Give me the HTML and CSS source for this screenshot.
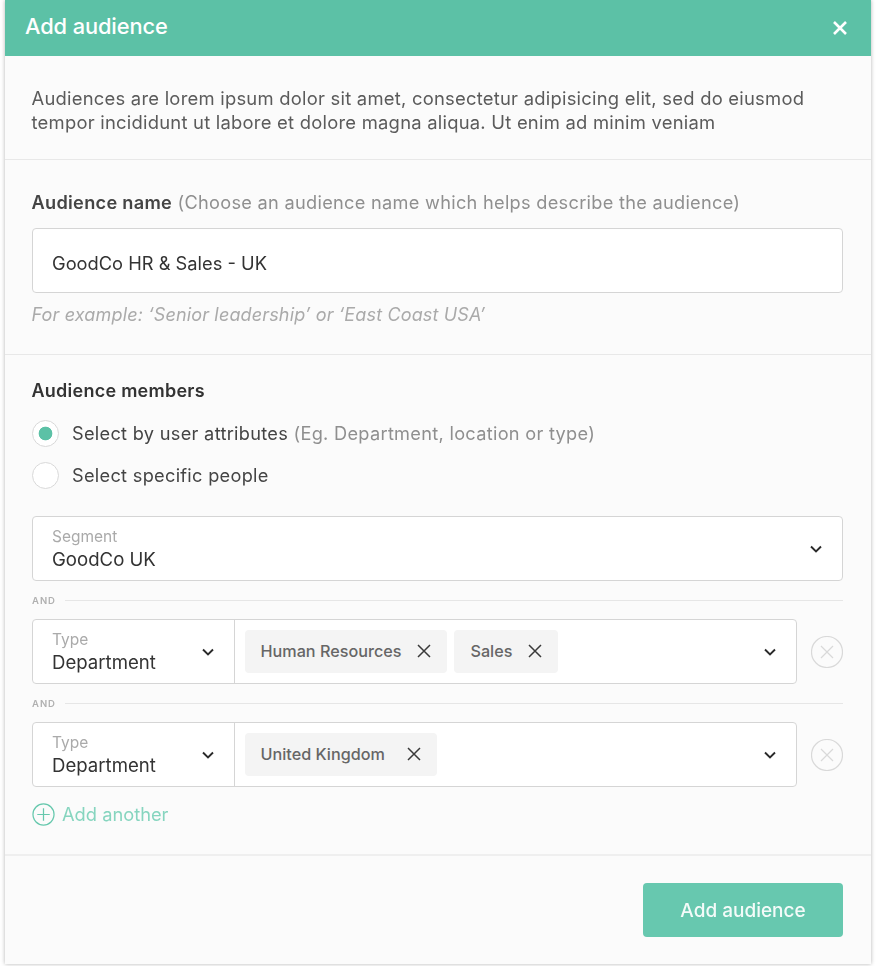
FILE: index.html
```html
<!DOCTYPE html>
<html lang="en">
<head>
<meta charset="utf-8">
<title>Add audience</title>
<link rel="stylesheet" href="styles.css">
</head>
<body>
<main class="modal">
  <header class="modal-head">
    <h1 class="modal-title">Add audience</h1>
    <svg class="close-icon" viewBox="0 0 16 16" width="16" height="16"><path d="M2 2l12 12M14 2L2 14"/></svg>
  </header>
  <section class="intro">
    <p>Audiences are lorem ipsum dolor sit amet, consectetur adipisicing elit, sed do eiusmod tempor incididunt ut labore et dolore magna aliqua. Ut enim ad minim veniam</p>
  </section>
  <section class="name-section">
    <div class="field-label"><strong>Audience name</strong> <span class="muted">(Choose an audience name which helps describe the audience)</span></div>
    <div class="box name-input">GoodCo HR &amp; Sales - UK</div>
    <div class="hint">For example: ‘Senior leadership’ or ‘East Coast USA’</div>
  </section>
  <section class="members">
    <h2 class="members-title">Audience members</h2>
    <div class="radio-row radio-row-1">
      <span class="radio radio-on"></span>
      <span class="radio-text">Select by user attributes <span class="muted">(Eg. Department, location or type)</span></span>
    </div>
    <div class="radio-row radio-row-2">
      <span class="radio"></span>
      <span class="radio-text">Select specific people</span>
    </div>
    <div class="box segment">
      <div class="stack">
        <span class="mini">Segment</span>
        <span class="value">GoodCo UK</span>
      </div>
      <svg class="chev" viewBox="0 0 12 8" width="12" height="8"><path d="M1 1.5l5 5 5-5"/></svg>
    </div>
    <div class="and"><span>AND</span><i></i></div>
    <div class="rule">
      <div class="box rule-box">
        <div class="type">
          <div class="stack">
            <span class="mini">Type</span>
            <span class="value">Department</span>
          </div>
          <svg class="chev" viewBox="0 0 12 8" width="12" height="8"><path d="M1 1.5l5 5 5-5"/></svg>
        </div>
        <div class="tags">
          <span class="tag tag-a">Human Resources<svg class="tag-x" viewBox="0 0 14 14" width="14" height="14"><path d="M1 1l12 12M13 1L1 13"/></svg></span>
          <span class="tag tag-b">Sales<svg class="tag-x" viewBox="0 0 14 14" width="14" height="14"><path d="M1 1l12 12M13 1L1 13"/></svg></span>
          <svg class="chev chev-end" viewBox="0 0 12 8" width="12" height="8"><path d="M1 1.5l5 5 5-5"/></svg>
        </div>
      </div>
      <svg class="remove" viewBox="0 0 32 32" width="32" height="32"><circle cx="16" cy="16" r="15.5"/><path d="M10 10l12 12M22 10L10 22"/></svg>
    </div>
    <div class="and"><span>AND</span><i></i></div>
    <div class="rule">
      <div class="box rule-box">
        <div class="type">
          <div class="stack">
            <span class="mini">Type</span>
            <span class="value">Department</span>
          </div>
          <svg class="chev" viewBox="0 0 12 8" width="12" height="8"><path d="M1 1.5l5 5 5-5"/></svg>
        </div>
        <div class="tags">
          <span class="tag tag-c">United Kingdom<svg class="tag-x" viewBox="0 0 14 14" width="14" height="14"><path d="M1 1l12 12M13 1L1 13"/></svg></span>
          <svg class="chev chev-end" viewBox="0 0 12 8" width="12" height="8"><path d="M1 1.5l5 5 5-5"/></svg>
        </div>
      </div>
      <svg class="remove" viewBox="0 0 32 32" width="32" height="32"><circle cx="16" cy="16" r="15.5"/><path d="M10 10l12 12M22 10L10 22"/></svg>
    </div>
    <div class="add-another">
      <svg class="plus" viewBox="0 0 24 24" width="23" height="23"><circle cx="12" cy="12" r="11"/><path d="M12 5.5v13M5.5 12h13"/></svg>
      <span>Add another</span>
    </div>
  </section>
  <footer class="modal-foot">
    <button class="primary" type="button">Add audience</button>
  </footer>
</main>
</body>
</html>
```

FILE: styles.css
```css
* { box-sizing: border-box; }
html, body { margin: 0; padding: 0; height: 100%; }
body {
  background: #fff;
  font-family: Inter, "Liberation Sans", sans-serif;
  color: #3a3a3a;
  padding: 0 0 2px 4.5px;
  overflow: hidden;
}
.modal {
  width: 866px;
  height: 964px;
  background: #fbfbfb;
  box-shadow: 0 0 4px rgba(0,0,0,.3);
  display: flex;
  flex-direction: column;
  filter: blur(.35px);
}
.modal-head {
  height: 56px;
  flex: none;
  background: #5cc1a6;
  display: flex;
  align-items: center;
  justify-content: space-between;
  padding: 0 22.5px 4px 20.5px;
  color: #fff;
}
.modal-title { margin: 0; font-size: 21.8px; font-weight: 500; letter-spacing: -.1px; }
.close-icon { fill: none; stroke: #fff; stroke-width: 2.6; margin-top: 3px; }
.intro {
  height: 104px;
  flex: none;
  padding: 29.5px 27px 0;
  border-bottom: 1px solid #e8e8e8;
  font-size: 18.4px;
  letter-spacing: .24px;
  line-height: 24px;
  color: #5b5b5b;
}
.intro p { margin: 0; width: 800px; }
.name-section {
  height: 195px;
  flex: none;
  padding: 30px 27.5px 0;
  border-bottom: 1px solid #e8e8e8;
}
.field-label { font-size: 18.2px; letter-spacing: .28px; line-height: 24px; margin: 0 0 0 -.5px; }
.field-label strong { font-weight: 600; color: #444; }
.muted { color: #8f8f8f; }
.box {
  background: #fff;
  border: 1px solid #d5d5d5;
  border-radius: 4px;
}
.name-input {
  margin-top: 14px;
  height: 65px;
  display: flex;
  align-items: center;
  padding: 5px 19px 0;
  font-size: 18.3px;
  color: #333;
}
.hint {
  margin: 10px 0 0 -.5px;
  font-size: 18px;
  letter-spacing: .15px;
  line-height: 24px;
  font-style: italic;
  color: #aaa;
}
.members {
  height: 501px;
  flex: none;
  padding: 24px 27.5px 0;
  border-bottom: 2px solid #efefef;
}
.members-title { margin: 0 0 0 -.5px; font-size: 18px; letter-spacing: .25px; line-height: 24px; font-weight: 600; color: #333; }
.radio-row {
  height: 27px;
  display: flex;
  align-items: center;
  gap: 13px;
  font-size: 18.2px;
  letter-spacing: .29px;
  color: #444;
}
.radio-text { margin-top: -2px; }
.radio-row-1 { margin-top: 17px; }
.radio-row-2 { margin-top: 15px; }
.radio {
  width: 27px;
  height: 27px;
  border-radius: 50%;
  border: 1px solid #d8d8d8;
  background: #fff;
  flex: none;
}
.radio-on {
  background: radial-gradient(circle, #5cc1a6 0 6.5px, #fff 7.2px);
}
.segment {
  margin-top: 27px;
  height: 65px;
  padding: 0 20px 0 19px;
  display: flex;
  align-items: center;
  justify-content: space-between;
}
.stack { display: flex; flex-direction: column; padding-top: 2px; }
.mini { font-size: 15.5px; line-height: 20px; color: #aaa; }
.value { font-size: 18.6px; line-height: 25px; color: #333; }
.chev { fill: none; stroke: #2a2a2a; stroke-width: 1.9; flex: none; }
.and {
  height: 38px;
  display: flex;
  align-items: center;
  gap: 9px;
  font-size: 9.5px;
  font-weight: 600;
  letter-spacing: 1px;
  color: #b0b0b0;
}
.and i { flex: 1; height: 1px; background: #e6e6e6; }
.rule { display: flex; align-items: center; gap: 14px; height: 65px; }
.rule-box { flex: 1; height: 65px; display: flex; }
.type {
  width: 202px;
  flex: none;
  padding: 0 20px 0 19px;
  border-right: 1px solid #d5d5d5;
  display: flex;
  align-items: center;
  justify-content: space-between;
}
.tags {
  flex: 1;
  padding: 0 20px 0 9.5px;
  display: flex;
  align-items: center;
  gap: 7px;
}
.tag {
  height: 43px;
  background: #f4f4f4;
  border-radius: 4px;
  padding: 0 16px 2px;
  display: flex;
  align-items: center;
  font-size: 16.2px;
  font-weight: 500;
  color: #666;
}
.tag-a { gap: 16px; }
.tag-b { gap: 16px; }
.tag-c { gap: 22px; }
.tag-x { fill: none; stroke: #3a3a3a; stroke-width: 1.5; flex: none; }
.chev-end { margin-left: auto; }
.remove { flex: none; fill: none; stroke: #d9d9d9; stroke-width: 1.2; }
.add-another {
  margin-top: 15px;
  display: flex;
  align-items: center;
  gap: 7px;
  font-size: 18.3px;
  line-height: 24px;
  color: #86d5bf;
}
.plus { fill: none; stroke: #66c8ad; stroke-width: 1.3; flex: none; }
.modal-foot {
  flex: 1;
  display: flex;
  justify-content: flex-end;
  align-items: flex-start;
  padding: 27px 27.5px 0;
}
.primary {
  width: 200px;
  height: 54px;
  border: 0;
  border-radius: 4px;
  background: #67c8af;
  color: #f4fbf9;
  font-family: inherit;
  font-size: 19px;
  font-weight: 500;
}
```
